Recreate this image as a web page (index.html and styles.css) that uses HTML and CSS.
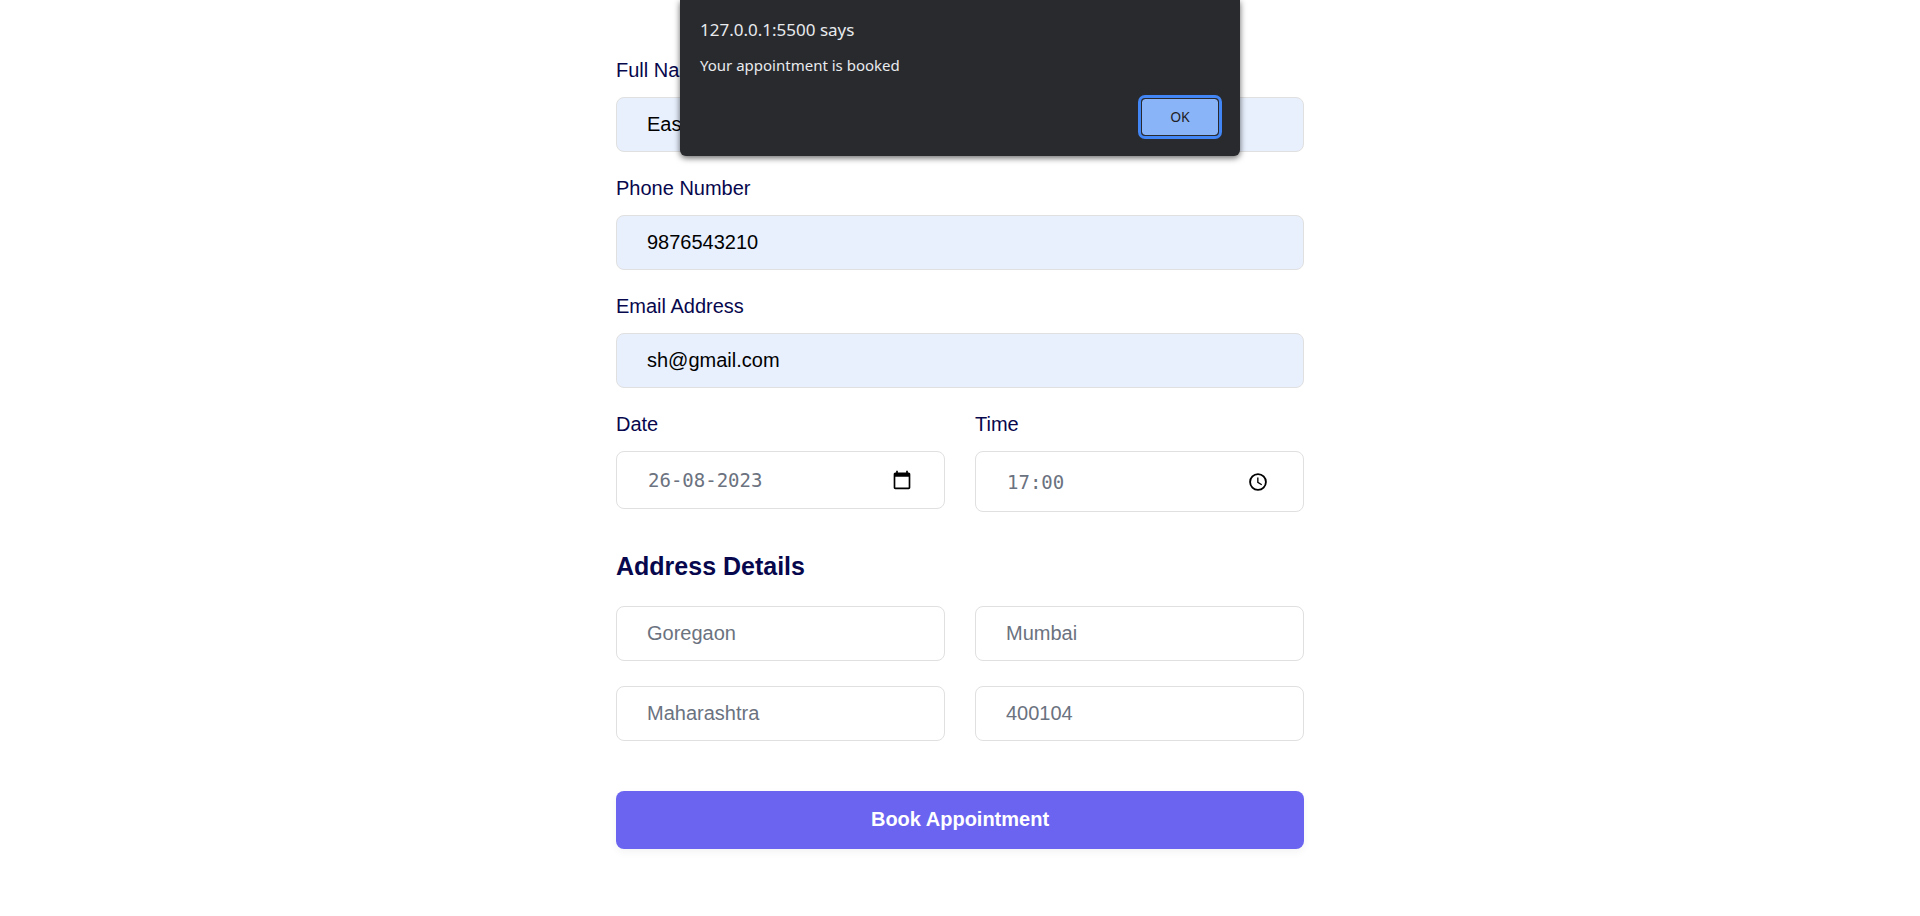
FILE: index.html
```html
<!DOCTYPE html>
<html lang="en">
<head>
<meta charset="utf-8">
<meta name="viewport" content="width=device-width, initial-scale=1">
<title>Book Appointment</title>
<link rel="stylesheet" href="styles.css">
</head>
<body>
<main class="page">
  <form class="form">
    <div class="field">
      <label class="label" for="name">Full Name</label>
      <input class="input filled" id="name" type="text" value="Eas">
    </div>
    <div class="field">
      <label class="label" for="phone">Phone Number</label>
      <input class="input filled" id="phone" type="text" value="9876543210">
    </div>
    <div class="field">
      <label class="label" for="email">Email Address</label>
      <input class="input filled" id="email" type="email" value="sh@gmail.com">
    </div>
    <div class="row">
      <div class="field">
        <label class="label" for="date">Date</label>
        <div class="picker picker-date">
          <input class="picker-input" id="date" type="text" value="26-08-2023">
          <button class="picker-button" type="button" aria-label="Show date picker">
            <svg width="20" height="20" viewBox="0 0 24 24"><path d="M20 3h-1V1h-2v2H7V1H5v2H4c-1.100 0-2 .9-2 2v16c0 1.100.9 2 2 2h16c1.100 0 2-.9 2-2V5c0-1.100-.9-2-2-2zm0 18H4V8h16v13z"/></svg>
          </button>
        </div>
      </div>
      <div class="field">
        <label class="label" for="time">Time</label>
        <div class="picker picker-time">
          <input class="picker-input" id="time" type="text" value="17:00">
          <button class="picker-button" type="button" aria-label="Show time picker">
            <svg width="20" height="20" viewBox="0 0 24 24" fill="none" stroke="#000"><circle cx="12" cy="12" r="9.500" stroke-width="2.200"/><path d="M11.800 6.500v6l4.700 2.800" stroke-width="1.600"/></svg>
          </button>
        </div>
      </div>
    </div>
    <section class="address">
      <h2 class="heading">Address Details</h2>
      <div class="address-grid">
        <input class="input" type="text" aria-label="Area" value="Goregaon">
        <input class="input" type="text" aria-label="City" value="Mumbai">
        <input class="input" type="text" aria-label="State" value="Maharashtra">
        <input class="input" type="text" aria-label="Post code" value="400104">
      </div>
    </section>
    <button class="submit" type="button">Book Appointment</button>
  </form>
</main>
<div class="alert" role="alertdialog" aria-labelledby="alert-title" aria-describedby="alert-text">
  <h1 class="alert-title" id="alert-title">127.0.0.1:5500 says</h1>
  <p class="alert-text" id="alert-text">Your appointment is booked</p>
  <button class="alert-ok" type="button">OK</button>
</div>
</body>
</html>
```
FILE: styles.css
```css
* {
  box-sizing: border-box;
}

body {
  margin: 0;
  background: #fff;
  color: #07074d;
  font-family: "Liberation Sans", Arial, sans-serif;
  font-size: 20px;
}

.page {
  padding: 55px 16px 60px;
}

.form {
  max-width: 688px;
  margin: 0 auto;
}

.field {
  flex: 1;
  min-width: 0;
  margin-bottom: 21px;
}

.label {
  display: block;
  margin-bottom: 12px;
  line-height: 30px;
}

.input {
  display: block;
  width: 100%;
  min-width: 0;
  height: 55px;
  padding: 0 30px;
  border: 1px solid #e0e0e0;
  border-radius: 8px;
  background: #fff;
  color: #6b7280;
  font: inherit;
  outline: none;
}

.filled {
  background: #e8f0fe;
  color: #000;
}

.row {
  display: flex;
  align-items: flex-start;
  gap: 30px;
}

.picker {
  display: flex;
  align-items: center;
  border: 1px solid #e0e0e0;
  border-radius: 8px;
}

.picker-date {
  height: 58px;
  padding: 0 32px 0 31px;
}

.picker-time {
  height: 61px;
  padding: 0 35px 0 31px;
}

.picker-input {
  flex: 1;
  min-width: 0;
  padding: 0;
  border: 0;
  background: none;
  color: #6b7280;
  font: 19px "DejaVu Sans Mono", monospace;
  outline: none;
}

.picker-button {
  display: flex;
  padding: 0;
  border: 0;
  background: none;
}

.heading {
  margin: 18px 0 25px;
  font-size: 25px;
  line-height: 30px;
}

.address-grid {
  display: grid;
  grid-template-columns: 1fr 1fr;
  gap: 25px 30px;
}

.submit {
  display: block;
  width: 100%;
  height: 58px;
  margin-top: 50px;
  padding: 0 0 2px;
  border: 0;
  border-radius: 8px;
  background: #6a64f1;
  box-shadow: 0 3px 8px rgba(0, 0, 0, 0.05);
  color: #fff;
  font: inherit;
  font-weight: 700;
}

.alert {
  position: absolute;
  top: 0;
  left: 50%;
  display: flex;
  flex-direction: column;
  width: 560px;
  padding: 16px 21px 20px 20px;
  border-radius: 0 0 6px 6px;
  background: #292a2d;
  box-shadow: 0 2px 6px rgba(0, 0, 0, 0.6);
  color: #e8eaed;
  font-family: "Noto Sans", sans-serif;
  transform: translateX(-50%);
}

.alert-title {
  margin: 0;
  font-size: 17px;
  font-weight: 400;
  line-height: 28px;
}

.alert-text {
  margin: 9px 0 21px;
  font-size: 15px;
  line-height: 24px;
}

.alert-ok {
  align-self: flex-end;
  width: 78px;
  height: 38px;
  padding: 0 0 2px;
  border: 1px solid #292a2d;
  border-radius: 4px;
  outline: 3px solid #4285f4;
  outline-offset: 0;
  background: #8ab4f8;
  background-clip: padding-box;
  color: #202124;
  font: 14px "Noto Sans", sans-serif;
}
```
